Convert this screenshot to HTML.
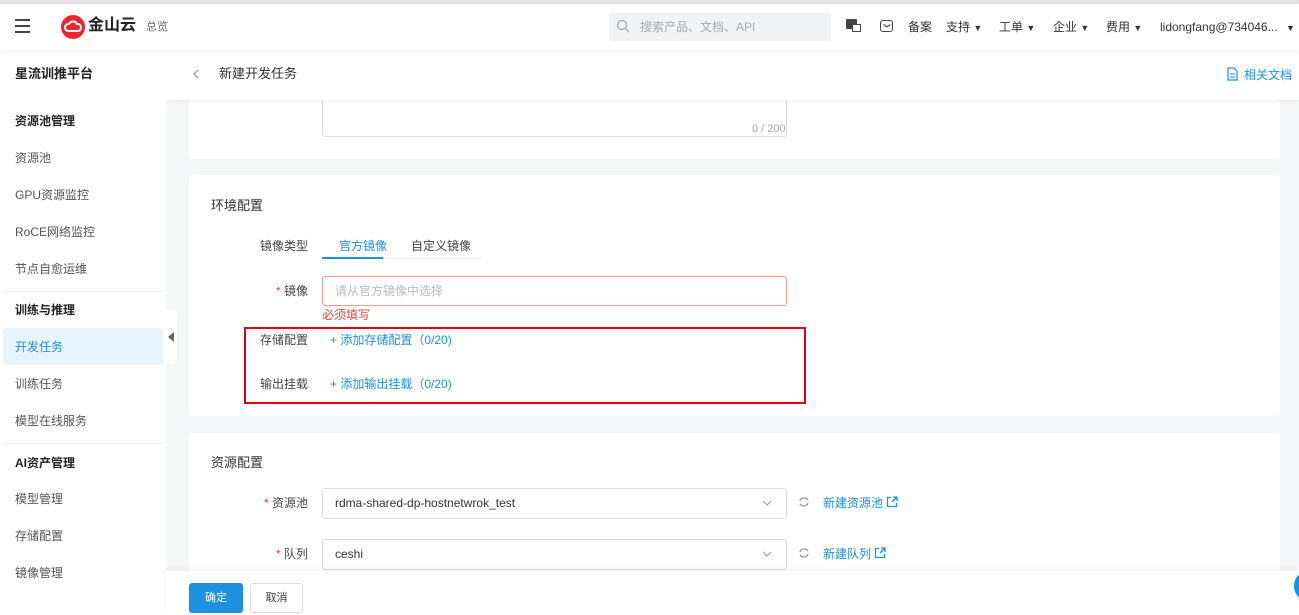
<!DOCTYPE html>
<html><head><meta charset="utf-8"><style>
*{margin:0;padding:0;box-sizing:border-box}
body{width:1299px;height:615px;overflow:hidden;background:#f5f6f8;font-family:"Liberation Sans","Noto Sans CJK SC",sans-serif;font-size:12px;line-height:14px;color:#333;position:relative}
.abs{position:absolute}
.top{left:0;top:0;width:1299px;height:4px;background:#e4e4e7}
.hdr{left:0;top:4px;width:1299px;height:46px;background:#fff;box-shadow:0 2px 6px rgba(0,0,0,.06);z-index:3}
.side{left:0;top:50px;width:166px;height:565px;background:#fff;z-index:2}
.ph{left:166px;top:50px;width:1133px;height:50px;background:#fff;box-shadow:0 2px 5px rgba(0,0,0,.04);z-index:1}
.card{background:#fff;border-radius:4px;left:189px;width:1091px}
.si{position:absolute;left:15px;font-size:12px;color:#555}
.sh{position:absolute;left:15px;font-size:12px;font-weight:bold;color:#222}
.lbl{position:absolute;font-size:12px;color:#444;text-align:right}
.inp{position:absolute;border:1px solid #dcdcdc;border-radius:3px;background:#fff}
.link{color:#1e8fe1}
.star{color:#f04040}
</style></head><body>
<div class="abs top"></div>
<div class="abs hdr">
  <div class="abs" style="left:15px;top:15px;width:15px;height:2px;background:#444;box-shadow:0 6px 0 #444,0 12px 0 #444"></div>
  <div class="abs" style="left:61px;top:11px;width:24px;height:24px;border-radius:50%;background:#e8262c"></div>
  <svg class="abs" style="left:64px;top:16px" width="18" height="14" viewBox="0 0 18 14"><path d="M4 11 A3.5 3.5 0 0 1 5 4 A4.5 4.5 0 0 1 13 4 A3.5 3.5 0 0 1 14 11 Z" fill="none" stroke="#fff" stroke-width="2"/></svg>
  <div class="abs" style="left:88px;top:13px;font-size:16px;line-height:18px;font-weight:bold;color:#222">金山云</div>
  <div class="abs" style="left:146px;top:16px;font-size:11px;color:#666">总览</div>
  <div class="abs" style="left:609px;top:9px;width:222px;height:28px;background:#f2f3f5;border-radius:3px"></div>
  <svg class="abs" style="left:616px;top:15px" width="14" height="14"><circle cx="6" cy="6" r="4.5" fill="none" stroke="#aaa" stroke-width="1.3"/><line x1="9.5" y1="9.5" x2="13" y2="13" stroke="#aaa" stroke-width="1.3"/></svg>
  <div class="abs" style="left:640px;top:16px;color:#aaa">搜索产品、文档、API</div>
  <div class="abs" style="left:846px;top:15px;width:11px;height:10px;background:#444;border-radius:1px"></div>
  <div class="abs" style="left:852px;top:20px;width:9px;height:8px;border:1px solid #444;background:#fff"></div>
  <div class="abs" style="left:880px;top:16px;width:13px;height:12px;border:1.3px solid #444;border-radius:3px"></div>
  <svg class="abs" style="left:883px;top:20px" width="8" height="4"><path d="M0.5 0.5 L4 3 L7.5 0.5" fill="none" stroke="#444" stroke-width="1.1"/></svg>
  <div class="abs" style="left:908px;top:16px;color:#333">备案</div>
  <div class="abs" style="left:946px;top:16px;color:#333">支持 <span style="font-size:9px">▼</span></div>
  <div class="abs" style="left:999px;top:16px;color:#333">工单 <span style="font-size:9px">▼</span></div>
  <div class="abs" style="left:1053px;top:16px;color:#333">企业 <span style="font-size:9px">▼</span></div>
  <div class="abs" style="left:1106px;top:16px;color:#333">费用 <span style="font-size:9px">▼</span></div>
  <div class="abs" style="left:1160px;top:16px;color:#333">lidongfang@734046... <span style="font-size:9px;margin-left:5px">▼</span></div>
</div>
<div class="abs side">
  <div class="sh" style="top:17px;font-size:13px">星流训推平台</div>
  <div class="sh" style="top:64px">资源池管理</div>
  <div class="si" style="top:101px">资源池</div>
  <div class="si" style="top:138px">GPU资源监控</div>
  <div class="si" style="top:175px">RoCE网络监控</div>
  <div class="si" style="top:212px">节点自愈运维</div>
  <div class="abs" style="left:3px;top:241px;width:160px;height:1px;background:#f0f0f0"></div>
  <div class="sh" style="top:253px">训练与推理</div>
  <div class="abs" style="left:3px;top:278px;width:160px;height:37px;background:#e6f4fd;border-radius:3px"></div>
  <div class="si" style="top:290px;color:#1e8fe1">开发任务</div>
  <div class="si" style="top:327px">训练任务</div>
  <div class="si" style="top:364px">模型在线服务</div>
  <div class="abs" style="left:3px;top:393px;width:160px;height:1px;background:#f0f0f0"></div>
  <div class="sh" style="top:406px">AI资产管理</div>
  <div class="si" style="top:442px">模型管理</div>
  <div class="si" style="top:479px">存储配置</div>
  <div class="si" style="top:516px">镜像管理</div>
</div>
<div class="abs" style="left:164px;top:310px;width:13px;height:54px;background:#fff;border-radius:0 5px 5px 0;z-index:2"></div>
<div class="abs" style="left:168px;top:332px;width:0;height:0;border-top:5px solid transparent;border-bottom:5px solid transparent;border-right:6px solid #666;z-index:3"></div>
<div class="abs ph">
  <svg class="abs" style="left:27px;top:19px" width="6" height="10"><path d="M5 1 L1 5 L5 9" fill="none" stroke="#888" stroke-width="1.2"/></svg>
  <div class="abs" style="left:53px;top:17px;font-size:13px;color:#333">新建开发任务</div>
  <svg class="abs" style="left:1061px;top:17px" width="11" height="14"><path d="M1 1h6l3 3v9H1z" fill="none" stroke="#1e8fe1" stroke-width="1.2"/><line x1="3" y1="7" x2="8" y2="7" stroke="#1e8fe1"/><line x1="3" y1="10" x2="8" y2="10" stroke="#1e8fe1"/></svg>
  <div class="abs link" style="left:1078px;top:18px">相关文档</div>
</div>
<div class="abs card" style="top:100px;height:59px">
  <div class="inp" style="left:133px;top:-5px;width:465px;height:42px;border-top:none"></div>
  <div class="abs" style="left:563px;top:22px;font-size:11px;color:#aaa">0 / 200</div>
</div>
<div class="abs card" style="top:175px;height:241px">
  <div class="abs" style="left:22px;top:24px;font-size:13px;color:#333">环境配置</div>
  <div class="lbl" style="left:60px;top:64px;width:59px">镜像类型</div>
  <div class="abs link" style="left:150px;top:64px">官方镜像</div>
  <div class="abs" style="left:222px;top:64px;color:#444">自定义镜像</div>
  <div class="abs" style="left:133px;top:83px;width:160px;height:1px;background:#eee"></div>
  <div class="abs" style="left:133px;top:82px;width:61px;height:2px;background:#1e8fe1"></div>
  <div class="lbl" style="left:60px;top:109px;width:59px"><span class="star">* </span>镜像</div>
  <div class="inp" style="left:133px;top:101px;width:465px;height:30px;border-color:#f59a9a"></div>
  <div class="abs" style="left:146px;top:109px;color:#bbb">请从官方镜像中选择</div>
  <div class="abs" style="left:133px;top:133px;color:#f04040">必须填写</div>
  <div class="lbl" style="left:60px;top:158px;width:59px">存储配置</div>
  <div class="abs link" style="left:141px;top:158px">+ 添加存储配置（0/20)</div>
  <div class="lbl" style="left:60px;top:202px;width:59px">输出挂载</div>
  <div class="abs link" style="left:141px;top:202px">+ 添加输出挂载（0/20)</div>
</div>
<div class="abs" style="left:244px;top:327px;width:562px;height:77px;border:2px solid #e60012;z-index:4"></div>
<div class="abs card" style="top:433px;height:182px">
  <div class="abs" style="left:22px;top:23px;font-size:13px;color:#333">资源配置</div>
  <div class="lbl" style="left:60px;top:63px;width:59px"><span class="star">* </span>资源池</div>
  <div class="inp" style="left:133px;top:55px;width:465px;height:31px"></div>
  <div class="abs" style="left:146px;top:63px;color:#333">rdma-shared-dp-hostnetwrok_test</div>
  <svg class="abs" style="left:573px;top:67px" width="10" height="6"><path d="M1 1 L5 5 L9 1" fill="none" stroke="#999" stroke-width="1.1"/></svg>
  <svg class="abs" style="left:609px;top:63px" width="12" height="12"><path d="M2 5 A4.5 4.5 0 0 1 10 4 M10 7 A4.5 4.5 0 0 1 2 8" fill="none" stroke="#999" stroke-width="1.3"/></svg>
  <div class="abs link" style="left:634px;top:63px">新建资源池</div>
  <svg class="abs" style="left:697px;top:63px" width="12" height="12"><path d="M5 1.5H1.5v9h9V7 M7 1h4v4 M11 1L6 6" fill="none" stroke="#1e8fe1" stroke-width="1.3"/></svg>
  <div class="lbl" style="left:60px;top:114px;width:59px"><span class="star">* </span>队列</div>
  <div class="inp" style="left:133px;top:106px;width:465px;height:31px"></div>
  <div class="abs" style="left:146px;top:114px;color:#333">ceshi</div>
  <svg class="abs" style="left:573px;top:118px" width="10" height="6"><path d="M1 1 L5 5 L9 1" fill="none" stroke="#999" stroke-width="1.1"/></svg>
  <svg class="abs" style="left:609px;top:114px" width="12" height="12"><path d="M2 5 A4.5 4.5 0 0 1 10 4 M10 7 A4.5 4.5 0 0 1 2 8" fill="none" stroke="#999" stroke-width="1.3"/></svg>
  <div class="abs link" style="left:634px;top:114px">新建队列</div>
  <svg class="abs" style="left:685px;top:114px" width="12" height="12"><path d="M5 1.5H1.5v9h9V7 M7 1h4v4 M11 1L6 6" fill="none" stroke="#1e8fe1" stroke-width="1.3"/></svg>
</div>
<div class="abs" style="left:166px;top:571px;width:1133px;height:44px;background:#fff;box-shadow:0 -2px 6px rgba(0,0,0,.05);z-index:2">
  <div class="abs" style="left:23px;top:12px;width:54px;height:30px;background:#1e8fe1;border-radius:3px;color:#fff;text-align:center;line-height:30px;font-size:11px">确定</div>
  <div class="abs" style="left:84px;top:12px;width:53px;height:30px;border:1px solid #ddd;border-radius:3px;color:#444;text-align:center;line-height:28px;font-size:11px">取消</div>
  <div class="abs" style="left:1128px;top:2px;width:20px;height:26px;border-radius:50%;background:#1e8fe1"></div>
</div>
</body></html>
